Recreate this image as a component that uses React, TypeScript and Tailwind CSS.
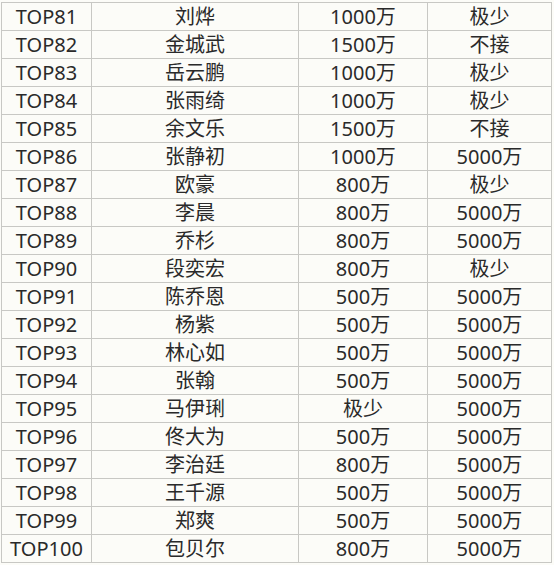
const rows: [string, string, string, string][] = [
  ['TOP81', '刘烨', '1000万', '极少'],
  ['TOP82', '金城武', '1500万', '不接'],
  ['TOP83', '岳云鹏', '1000万', '极少'],
  ['TOP84', '张雨绮', '1000万', '极少'],
  ['TOP85', '余文乐', '1500万', '不接'],
  ['TOP86', '张静初', '1000万', '5000万'],
  ['TOP87', '欧豪', '800万', '极少'],
  ['TOP88', '李晨', '800万', '5000万'],
  ['TOP89', '乔杉', '800万', '5000万'],
  ['TOP90', '段奕宏', '800万', '极少'],
  ['TOP91', '陈乔恩', '500万', '5000万'],
  ['TOP92', '杨紫', '500万', '5000万'],
  ['TOP93', '林心如', '500万', '5000万'],
  ['TOP94', '张翰', '500万', '5000万'],
  ['TOP95', '马伊琍', '极少', '5000万'],
  ['TOP96', '佟大为', '500万', '5000万'],
  ['TOP97', '李治廷', '800万', '5000万'],
  ['TOP98', '王千源', '500万', '5000万'],
  ['TOP99', '郑爽', '500万', '5000万'],
  ['TOP100', '包贝尔', '800万', '5000万'],
]

export default function App() {
  return (
    <div
      className="h-[565px] w-[554px] overflow-hidden bg-[#fcfcf8] pt-[2px] pl-[1px] text-[20px] text-[#2a2a2a]"
      style={{ fontFamily: '"Noto Sans", "Noto Sans CJK SC", sans-serif' }}
    >
      <div className="grid w-max grid-cols-[90px_207px_129px_124px] border-t border-l border-[#c8c8c4]">
        {rows.map((row) =>
          row.map((cell, i) => (
            <div
              key={row[0] + i}
              className="flex h-[28px] items-center justify-center border-r border-b border-[#c8c8c4] leading-none"
            >
              {cell}
            </div>
          )),
        )}
      </div>
    </div>
  )
}
